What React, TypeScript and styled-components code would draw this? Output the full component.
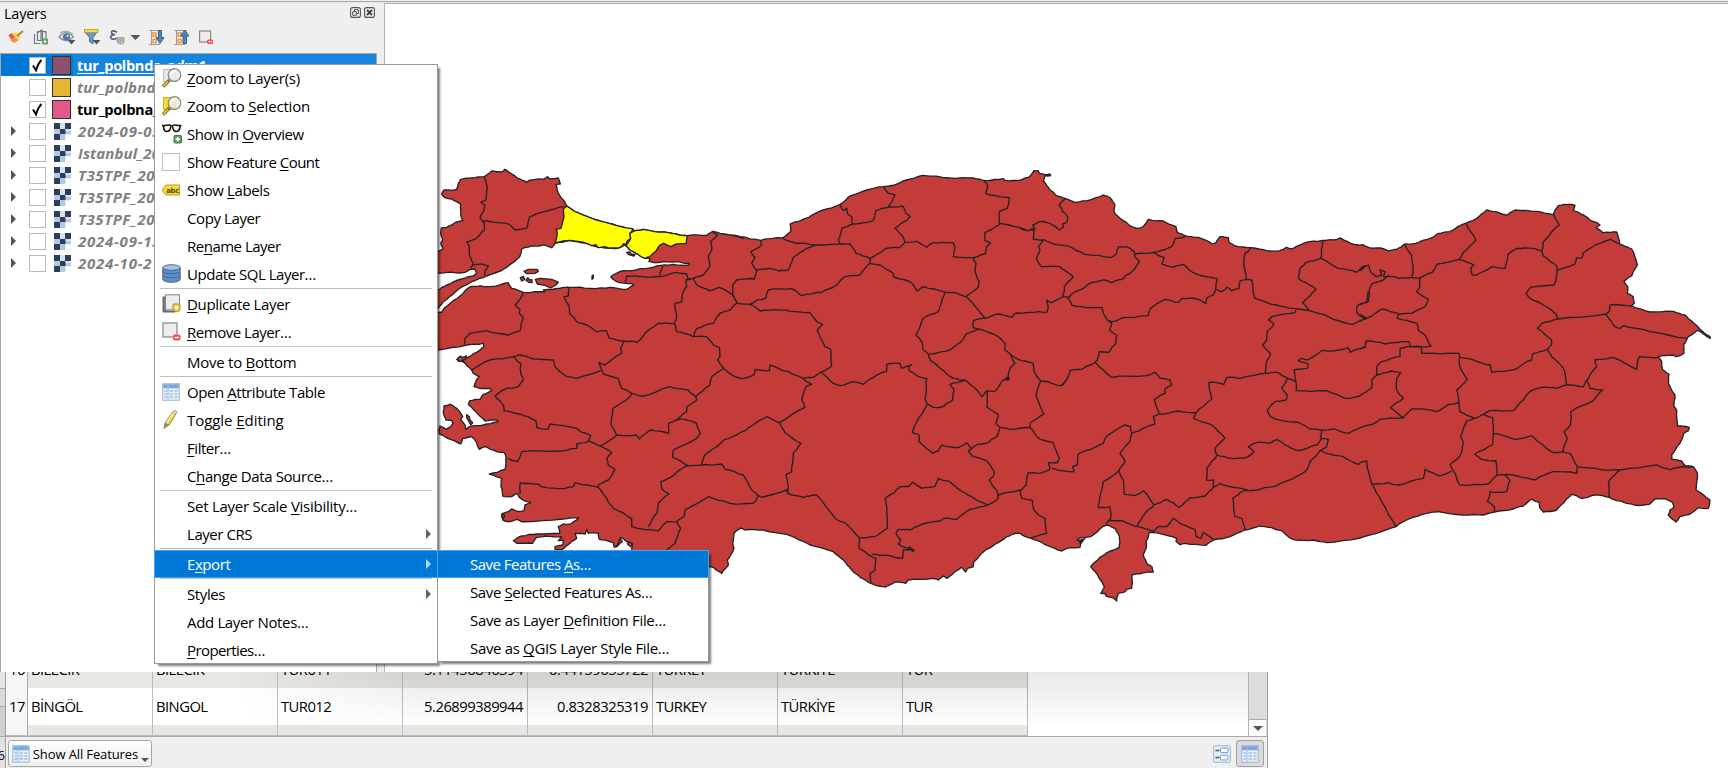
import React from "react";
import styled, { createGlobalStyle, css } from "styled-components";

const GlobalStyle = createGlobalStyle`
  * { box-sizing: border-box; }
  body { margin: 0; background: #fff; overflow: hidden; }
  #root { font-family: "Open Sans", "Noto Sans", sans-serif; color: #000; }
`;

/* ---------- map geometry ---------- */

type Pt = [number, number];
type Frame = "A" | "B" | "C" | "D" | "E";

// Digitising frames: origin of each sheet; all sheets are drawn at 3 units per pixel.
const ORIGIN: Record<Frame, Pt> = {
  A: [430, 150],
  B: [430, 370],
  C: [720, 150],
  D: [1020, 150],
  E: [1360, 180],
};

const pts = (frame: Frame, s: string): Pt[] =>
  s.trim().split(/\s+/).map((p) => {
    const [x, y] = p.split(",").map(Number);
    return [ORIGIN[frame][0] + x / 3, ORIGIN[frame][1] + y / 3] as Pt;
  });

// Deterministic midpoint displacement gives the lines a surveyed look.
const hash = (n: number) => {
  const v = Math.sin(n) * 43758.5453;
  return v - Math.floor(v);
};
const roughen = (line: Pt[], depth = 2): Pt[] => {
  if (depth === 0) return line;
  const out: Pt[] = [line[0]];
  for (let i = 1; i < line.length; i++) {
    const [ax, ay] = line[i - 1];
    const [bx, by] = line[i];
    const len = Math.hypot(bx - ax, by - ay);
    if (len > 3.5) {
      const seed = (ax + bx) * 1.37 + (ay + by) * 2.11;
      const ang = hash(seed) * Math.PI * 2;
      const amp = Math.min(len * 0.055, 0.6);
      out.push([(ax + bx) / 2 + Math.cos(ang) * amp, (ay + by) / 2 + Math.sin(ang) * amp]);
    }
    out.push([bx, by]);
  }
  return roughen(out, depth - 1);
};
const toPath = (line: Pt[], close = false, rough = true) =>
  "M" + (rough ? roughen(line) : line).map(([x, y]) => `${x.toFixed(1)} ${y.toFixed(1)}`).join("L") + (close ? "Z" : "");

const LAND = toPath(
  [
    ...pts("A", `-60,305 24,305 40,295 32,280 38,268 32,250 34,234 50,232 75,218 98,212 92,195 92,163 80,155 65,147 45,143 35,132 42,120
      80,118 85,100 92,88 125,84 162,80 185,63 215,66 225,58 242,70 262,84 290,97 300,90 340,88 352,80 360,87 385,84 391,102
      378,104 382,122 400,150 410,168 432,183 455,193 480,203 500,210 530,218 560,227 585,233 608,236 612,243 640,238 700,246
      735,251 773,257 830,256 848,244 870,250 940,265`),
    ...pts("C", `0,250 60,260 122,271 187,264 212,245 210,222 265,203 310,180 360,163 390,138 440,120 490,110 520,106 560,90 608,76
      690,84 760,84 795,92 850,86 855,91 900,91 925,82 942,62 955,62 958,70 974,74 990,72 992,77 975,77 970,92 990,120 1010,138 1035,145`),
    ...pts("D", `170,157 210,150 250,135 270,143 285,165 282,185 300,205 330,228 350,236 370,230 385,208 430,213 468,230 472,247 495,257
      535,262 575,281 588,278 600,260 625,263 628,278 645,288 690,293 740,302 780,302 800,292 815,297 850,280 908,271 940,270 962,264
      1005,284 1030,284`),
    ...pts("E", `30,204 70,206 85,213 110,208 135,192 175,188 210,175 235,160 270,155 300,137 330,124 350,115 380,90 415,97 440,106
      465,90 530,94 580,104 595,77 612,73 645,76 640,92 652,95 690,120 720,135 708,143 728,158 770,156 775,172 780,193 815,207
      832,255 815,288 792,303 803,320 802,340 820,350 823,370 815,378 870,396 940,394 975,405 1000,428 1020,448 1050,470 1051,475
      1035,465 1012,451 985,470 972,492 972,520 948,530 940,525 895,530 905,545 907,568 927,582 925,610 945,645 942,680 950,690
      952,738 988,742 985,752 970,762 960,790 935,825 935,838 965,843 977,858 1000,860 1012,878 1008,930 1050,960 1045,985
      1015,983 990,1002 960,1010 948,1026 925,1005 930,990 942,982 938,968 915,956 885,957 868,973 845,976 800,970 770,962
      748,952 705,945 665,955 635,943 612,968 590,990 550,996 540,985 538,968 515,957 490,978 460,987 400,997 370,1005 310,1005
      235,995 200,1000 140,1020 108,1040 50,1060 0,1074`),
    ...pts("D", `920,1178 880,1170 820,1169 785,1142 755,1133 718,1128 675,1140 630,1160 580,1170 558,1186 495,1180 480,1184 468,1175
      470,1165 440,1156 400,1148 388,1147 385,1160 378,1175 378,1197 370,1215 382,1243 396,1250 400,1266 375,1268 345,1272
      335,1275 337,1300 335,1315 320,1318 315,1325 295,1330 290,1353 278,1343 258,1338 255,1330 242,1330 253,1312 235,1280
      212,1250 240,1222 270,1203 298,1192 298,1158 285,1135 262,1125 248,1130 212,1160 180,1163 172,1170 185,1175 180,1192
      140,1195 125,1203 75,1184 30,1164`),
    ...pts("C", `900,1150 880,1152 860,1160 830,1180 800,1198 762,1235 760,1250 742,1255 737,1266 725,1252 700,1270 680,1285 670,1278
      655,1290 640,1285 565,1290 557,1300 525,1296 497,1311 460,1303 430,1287 395,1260 370,1230 340,1205 270,1185 200,1153
      130,1140 75,1140 62,1134 42,1150 38,1180 42,1195 22,1230 25,1246 5,1271`),
    ...pts("B", `876,610 850,592 835,590 700,600 610,570 605,540 607,520 590,515 573,502 565,525 553,532 550,517 530,512 508,508 505,490
      475,490 470,478 465,492 435,490 440,505 420,520 398,538 375,538 375,530 398,525 400,510 385,512 395,500 345,498 320,502
      308,520 260,520 250,512 275,498 320,492 390,490 385,470 400,462 422,462 447,443 400,447 275,455 262,448 232,455 218,450
      215,432 235,425 245,417 265,425 282,422 285,405 303,397 290,395 268,382 262,370 245,380 218,378 213,350 215,325 178,312
      225,298 228,260 222,247 200,245 165,230 148,238 140,218 125,200 98,205 92,222 78,215 45,200 28,192 26,180 30,168 48,178
      62,170 70,160 65,152 48,150 40,125 42,108 60,103 80,115 98,140 92,150 105,165 108,178 118,170 160,165 205,155 200,150
      165,153 130,118 115,102 120,92 150,88 160,73 185,62 180,55 150,55 132,50 140,28 148,20 130,10 125,0`),
    ...pts("A", `100,635 80,628 115,622 150,600 162,590 160,580 110,585 24,600 -60,610`),
  ],
  true
);

const SEAS = [
  toPath(pts("A", `-60,372 24,370 50,367 105,367 120,358 135,357 140,368 130,378 95,387 50,405 24,420 -60,450`), true),
  toPath(
    pts("A", `-60,500 24,475 40,455 48,450 85,418 125,395 170,378 225,355 245,340 268,322 275,297 310,288 345,285 365,293 376,279 420,271
      470,280 497,290 535,294 565,294 585,285 600,300 645,325 660,325 657,335 690,337 740,335 777,340 777,345 730,343 680,348
      650,355 580,362 542,380 560,395 588,400 612,403 590,418 540,412 480,415 420,412 390,415 340,420 345,425 282,428
      245,415 235,398 180,410 150,408 122,410 90,438 52,468 45,472 35,487 24,487 -60,520`),
    true
  ),
];

const ISLANDS = [
  pts("A", `282,364 295,358 322,358 325,364 315,370 290,371`),
  pts("A", `316,388 330,385 365,388 385,396 378,405 362,414 345,406 322,402`),
  pts("A", `271,383 280,379 284,388 275,393`),
  pts("A", `288,391 293,383 300,390 306,389 306,398 296,397`),
  pts("A", `486,378 490,375 490,385 486,388`),
  pts("A", `590,307 600,306 604,312 615,314 612,318 596,314`),
  pts("A", `83,624 92,618 95,623 110,618 106,628 98,630 104,638 94,633 85,634`),
  pts("B", `110,134 118,140 120,150 128,158 122,165 114,150 110,143`),
  pts("B", `570,505 577,515 570,520 560,530`),
  pts("B", `597,515 608,522 602,530 592,522`),
  pts("B", `218,430 224,438 220,446 214,438`),
].map((p) => toPath(p, true, false));

const SELECTED = [
  toPath(
    pts("A", `410,168 432,183 455,193 480,203 500,210 530,218 560,227 585,233 608,236 605,245 600,250 602,265 592,272 588,284 580,281
      577,288 565,294 535,294 525,290 505,293 497,284 485,287 470,280 455,276 420,271 400,273 376,279 380,262 382,248 379,238
      393,235 402,200 400,178`),
    true,
    false
  ),
  toPath(
    pts("A", `612,243 640,238 700,246 735,251 773,257 768,280 740,282 722,290 700,280 690,285 680,300 660,320 645,325 600,300 585,285
      592,283 602,265 600,250`),
    true
  ),
];

const BORDER_SOURCE: [Frame, string][] = [
  ["A", "162,80 172,110 168,150 152,157 165,165 162,180 150,203 162,220 163,240 135,268 110,275 118,290 118,315 130,340 122,355"],
  ["A", "160,213 200,217 235,222 255,240 290,235 300,200 340,185 385,172 403,170"],
  ["A", "130,345 155,342 175,348 165,362 165,378"],
  ["A", "103,583 105,565 120,550 170,542 235,555 270,542 280,505 268,490 270,478 256,465 280,430"],
  ["A", "417,415 415,438 402,440 418,470 420,492 440,515 470,525 500,545 528,542 538,565 580,573 622,577 645,550 685,520 733,520"],
  ["A", "733,520 740,500 735,460 755,455 758,430 770,410 768,390 787,385"],
  ["A", "733,520 740,545 770,552 790,560 830,560 850,585 868,592 870,620 863,630 882,655"],
  ["A", "585,397 590,378 640,380 690,380 690,370 698,350 690,340"],
  ["A", "690,380 740,367 770,372 773,385 790,385"],
  ["A", "848,244 862,255 842,275 845,300 835,320 840,345 820,375 790,385"],
  ["A", "790,385 800,405 838,422 868,412 905,432"],
  ["C", "122,271 125,285 92,305 105,322 95,340 110,360 103,387 50,390 38,405 38,432 52,460"],
  ["A", "905,432 922,460"],
  ["A", "790,560 800,535 850,520 870,490 900,480 920,460"],
  ["C", "52,460 90,463 110,450 138,445 145,420 215,416 245,437 305,427 350,405 375,380 420,375 450,340"],
  ["C", "90,463 120,483 175,480 210,484 270,487 290,515 308,523 292,540 315,590 332,598 335,648 300,668 280,682 248,685 205,665 150,645 148,662 105,658 102,674 68,686 40,678 10,655"],
  ["C", "110,360 150,355 175,363 205,360 220,322 260,295 285,287"],
  ["C", "187,264 230,280 285,285 360,282 390,282 408,310 450,325 450,340"],
  ["C", "360,163 370,182 380,175 383,192 395,200 398,222 365,235 355,270 360,282"],
  ["C", "398,222 460,212 468,182 505,172 525,135 505,130 490,110"],
  ["C", "505,172 548,168 558,190 570,200 560,212 525,235 545,255 555,277 540,293 497,295 450,325"],
  ["C", "555,277 590,274 620,292 640,278 700,278 705,292 700,320 765,322 795,312 800,290 812,280 795,272 795,248 838,225 838,185 862,175 868,143 810,135 797,130 803,105 792,92"],
  ["C", "838,220 885,230 925,243 940,235"],
  ["C", "450,340 480,345 520,370 520,380 570,395 592,423 610,410 670,425 705,427 738,440 775,412 778,395 765,365 768,340 760,330 765,322"],
  ["C", "738,440 762,465 795,505 760,512 760,533 775,537"],
  ["C", "795,505 840,492 875,502 885,490 930,487 980,487 985,475"],
  ["D", "85,478 80,450 95,458 130,440 148,442"],
  ["C", "675,427 660,470 655,485 610,505 600,530 588,555 605,575 610,600 625,613 632,632 660,655 700,685 735,690"],
  ["C", "625,613 655,608 690,600 720,578 740,550 775,537 835,560 855,580 855,600 870,612 885,640 870,655 865,685 850,690 822,725 800,722 785,740 765,715 735,690"],
  ["C", "858,683 866,681 868,688 860,690 858,683"],
  ["C", "870,612 905,632 940,640 942,665 962,692 985,695 1022,707 1045,680"],
  ["C", "735,690 690,703 702,718 698,750 670,770 640,772 622,762 615,745 620,685 595,680 568,662 565,650 575,645 545,655 540,640 500,643 500,665 470,675 430,703 400,695 360,707 340,700 305,668"],
  ["C", "622,762 590,815 577,848 597,855 597,875 637,910 655,903 665,885 715,893 740,878 757,897"],
  ["C", "800,722 800,770 835,793 828,820 840,832 870,838 930,832 930,820 972,792 957,760 948,735 962,692"],
  ["C", "840,832 830,860 800,880 775,882 745,903 755,917 800,933 823,965 820,980 808,990 820,1010 832,1025 835,1045 803,1065"],
  ["C", "835,1035 900,1020 905,1045 938,1052 940,1075 955,1095 975,1105 980,1150 932,1165"],
  ["C", "903,1022 918,1005 925,968 960,970 990,957"],
  ["C", "930,832 960,868 1000,878 1018,925 1012,938 985,938 990,957"],
  ["C", "803,1065 755,1040 720,1020 690,995 655,985 645,1010 605,1015 578,997 565,1010 540,1010 520,1030 495,1045 500,1085 502,1135 465,1160 418,1163"],
  ["C", "803,1065 750,1078 710,1108 670,1105 660,1113 600,1125 570,1140 535,1138 528,1150 542,1170 535,1182 555,1192 580,1205 582,1200 568,1190 566,1200 550,1200 548,1225 510,1217 455,1213"],
  ["C", "418,1163 418,1195 440,1210 468,1225 465,1260 450,1270 453,1297"],
  ["C", "418,1163 375,1118 345,1105 290,1035 250,1042 203,1030 200,1020 125,1042 115,1037"],
  ["C", "203,1030 203,1000 198,973 215,965 220,910 243,880 195,848 178,818 140,800 100,825 50,855 15,868 0,882"],
  ["C", "178,818 255,772 245,750 258,710 275,703 248,685"],
  ["D", "135,147 118,165 128,185 143,200 142,215 128,222 130,232 118,240 90,220 60,215 38,225 45,238 20,242 0,235"],
  ["D", "40,235 40,268 75,270 100,282 145,288 195,313 275,322 290,310 295,290 320,290 343,305 345,320 358,333 335,365 315,378 312,385 275,398 250,390 205,402 195,412 155,432 145,445 155,465 195,472 245,472 250,490 262,510"],
  ["D", "70,270 55,290 60,300 50,330 65,350 120,350 160,380 133,410 128,440"],
  ["D", "345,312 400,307 430,300 455,290 465,265 495,260"],
  ["D", "400,307 432,322 425,342 460,352 490,343 520,368 560,380 592,385 587,418 605,425 622,412 635,422 657,415 660,392 678,388 672,350 675,310 692,295"],
  ["D", "587,418 580,435 560,445 557,460 535,448 485,445 475,457 435,448 412,460 390,478 385,497 310,503 275,515 262,510"],
  ["D", "678,388 695,390 705,445 770,465 790,470 868,482 910,493 940,508 997,523 1035,507 1012,490 1010,470 1020,462 1040,458 1045,425"],
  ["D", "868,482 848,458 888,418 865,402 835,385 840,355 858,337 903,325 908,271"],
  ["D", "903,325 955,355 1010,367 1035,347"],
  ["D", "828,480 825,488 755,500 745,510 762,522 742,545 740,570 728,585 752,612 742,630 735,670"],
  ["D", "262,510 275,520 268,540 290,555 288,580 265,608 238,605 232,630 225,637 185,658 150,662 145,680 125,707"],
  ["D", "225,637 275,682 380,677 405,667 420,685 450,690 455,705 435,717 435,730 403,748 418,790"],
  ["D", "418,792 475,783 528,788 575,748 567,697 612,703 620,682 660,685 735,670 772,667 803,685 828,695"],
  ["D", "803,685 785,712 802,735 798,750 765,755 742,780 750,798 770,808 838,818 870,837 905,840 900,865"],
  ["D", "828,695 822,660 862,655 865,642 835,632 845,625 862,630 905,602 940,603 985,593 990,607 1035,592 1040,573"],
  ["D", "828,695 828,722 920,722 975,745 1020,738"],
  ["D", "905,840 945,837 985,850 1020,833"],
  ["D", "528,788 520,805 575,825 615,865 585,895 590,915 635,925 680,922 702,905 685,890 710,878 750,880 770,868 795,885 835,902 890,885 905,865 925,868 920,890 900,902"],
  ["D", "590,918 560,955 560,990 582,990 580,1012"],
  ["D", "580,1012 600,1000 640,1012 700,1022 770,1007 835,977 860,960 870,935 900,902 930,912 970,920 1015,943 1020,940"],
  ["D", "700,1020 670,1022 638,1045 645,1100 665,1105 675,1140"],
  ["D", "418,792 400,800 405,822 375,833 335,850 332,830 315,825 260,858 250,880 175,912 172,945 158,950 162,965 130,962 95,955"],
  ["D", "335,850 330,875 300,910 315,935 297,962 250,995 240,1040 235,1073 270,1070 272,1105 258,1120"],
  ["D", "297,962 310,990 313,1033 345,1037 370,1022 402,1065 385,1080 355,1120 352,1130"],
  ["D", "402,1065 440,1048 478,1072 510,1043 555,1038 580,1012"],
  ["D", "265,1112 310,1113 352,1130 400,1145 415,1130 440,1130 460,1105 480,1120 525,1138 527,1158 543,1165 550,1147 580,1168"],
  ["D", "172,1172 195,1166 178,1176 190,1172 180,1182"],
  ["E", "135,195 155,225 160,260 155,293 115,295 85,288 70,290 75,275 60,270 65,285 50,290 32,275 25,255 0,272"],
  ["E", "85,288 70,300 35,312 28,330 25,365 0,374"],
  ["E", "155,293 180,293 215,278 232,252 298,238 310,217 348,180 318,130"],
  ["E", "180,293 180,322 170,335 205,358 195,380 155,400 115,402 112,415 172,430 175,450 198,470 213,498 150,500 147,485 75,492 18,483 15,500 0,508"],
  ["E", "115,400 65,387 20,415 0,403"],
  ["E", "20,415 0,425"],
  ["E", "298,238 342,255 332,265 337,285 350,285 395,260 435,265 443,225 470,205 520,205 545,212 550,185 598,135 582,104"],
  ["E", "545,212 550,228 588,255 592,270 582,315 512,322 498,340 510,355 555,378 590,405 592,417"],
  ["E", "592,270 645,252 650,233 665,235 670,218 720,190 750,178 775,192"],
  ["E", "815,378 750,375 748,395 738,402 592,417 545,430 532,445 575,480 575,492 563,507 520,520 515,540 465,568 395,577 390,555 345,542 300,533 297,520 185,520 183,500 150,500"],
  ["E", "738,402 765,440 780,446 790,437 870,455 983,475"],
  ["E", "563,507 575,530 610,565 620,615 670,620 680,600"],
  ["E", "680,602 690,585 710,560 705,540 760,532 830,568 838,530 895,533"],
  ["E", "680,602 690,625 728,630 700,662 632,695 632,735 612,755 622,775 608,815"],
  ["E", "620,615 592,625 545,622 510,635 490,660 460,692 390,692 370,703 345,715 300,695 297,668 290,630 322,597 300,560 297,533"],
  ["E", "370,703 398,712 400,760 465,778 515,767 535,785 580,818 608,815 630,820 652,860 650,880 580,875 525,900 440,883 412,885"],
  ["E", "400,760 397,795 345,822 365,838 408,842 412,885 385,912 300,915 285,880 270,855 300,828 310,790 302,770 320,722 345,715"],
  ["E", "297,668 262,675 230,695 195,688 155,687 130,713 92,683 130,655 110,630 110,595 122,577 95,573 50,585 50,560 65,545 120,530 120,505 150,500"],
  ["E", "50,585 35,600 35,625 0,648"],
  ["E", "130,713 60,718 30,735 0,743"],
  ["E", "0,848 20,843 35,912 65,965 108,1040"],
  ["E", "35,912 85,908 115,915 190,895 195,868 240,888 275,873"],
  ["E", "435,885 450,903 440,935 390,935 383,965 403,980 403,997"],
  ["E", "652,860 720,868 780,870 745,905 748,952"],
  ["E", "780,870 890,855 930,870 965,860 1000,860"],
  ["A", "125,660 180,630 250,620 272,640 272,670 280,690 265,710 230,715 195,738 220,765 222,785"],
  ["A", "250,620 270,615 310,627 370,630 375,650 410,680 440,685 515,660 507,637 525,645 575,610 572,595 580,575"],
  ["A", "515,660 520,672 565,685 575,715 605,730"],
  ["A", "605,730 640,738 720,710 775,720 797,740 840,705 845,680 882,655"],
  ["B", "222,122 270,132 318,152 320,172 355,177 360,162 440,175 455,187 482,197 475,212 510,228 560,195 543,165 548,115 600,80 605,70"],
  ["B", "797,80 800,90 770,110 770,125 740,150 715,160 715,190 662,180 628,207 620,195 560,195"],
  ["B", "740,150 765,148 800,160 812,190 800,205 730,240 728,262 775,287 815,285 875,282 885,298 940,315 965,360 985,378 970,400 900,400 835,380 765,420 762,440 740,455"],
  ["B", "815,285 825,255 870,222"],
  ["B", "775,287 740,307 725,320 692,335 697,358 717,372 685,400 680,430 655,470"],
  ["B", "475,215 440,222 440,235 385,243 275,245 262,275 235,265"],
  ["B", "510,228 545,248 530,265 535,285 555,298 535,330 505,345 505,352 435,338 430,350 405,355 335,350 325,342 270,338 270,372"],
  ["B", "505,352 530,385 550,415 605,445 605,470 640,478 685,482 710,455 740,455 752,475 735,520 710,540"],
];
const BORDERS = BORDER_SOURCE.map(([f, s]) => toPath(pts(f, s))).join("");

/* ---------- window shell ---------- */

const Screen = styled.div`
  position: relative;
  display: flex;
  flex-direction: column;
  width: 1728px;
  height: 768px;
  overflow: hidden;
  background: #fff;
`;
const TopEdge = styled.div`
  flex: none;
  height: 3px;
  background: #efefef;
  border-bottom: 1px solid #e4e4e4;
  box-shadow: inset 0 -1px 0 #a9a9a9;
`;
const Workspace = styled.div`
  flex: none;
  display: flex;
  height: 669px;
`;
const Dock = styled.section`
  display: flex;
  flex-direction: column;
  flex: none;
  width: 384px;
  background: #efefef;
`;
const DockTitle = styled.header`
  display: flex;
  align-items: center;
  height: 19px;
  padding: 1px 9px 0 4px;
  font-size: 14.5px;
  letter-spacing: -0.25px;
`;
const DockName = styled.span`
  flex: 1;
`;
const DockButtons = styled.span`
  display: flex;
  gap: 3px;
  margin-top: -1px;
`;
const Toolbar = styled.div`
  display: flex;
  align-items: center;
  height: 29px;
  margin-bottom: 2px;
  padding-left: 7px;
  svg { flex: none; display: block; }
`;
const Tree = styled.div`
  flex: 1;
  width: 377px;
  background: #fff;
  border: 1px solid #a7a7a7;
  border-bottom: 0;
  overflow: hidden;
`;
const TreeRow = styled.div<{ $selected?: boolean }>`
  display: flex;
  align-items: center;
  height: 22px;
  padding-left: 10px;
  background: ${(p) => (p.$selected ? "linear-gradient(90deg,#0078d7 72px,#1683dd 72px)" : "transparent")};
`;
const Expander = styled.i<{ $shown: boolean }>`
  width: 5px;
  margin-right: 13px;
  border-left: 5px solid ${(p) => (p.$shown ? "#555" : "transparent")};
  border-top: 5px solid transparent;
  border-bottom: 5px solid transparent;
`;
const CheckBox = styled.span`
  display: flex;
  width: 17px;
  height: 17px;
  margin-right: 6px;
  background: #fff;
  border: 1px solid #b9b9b9;
`;
const Swatch = styled.span<{ $color: string }>`
  width: 19px;
  height: 19px;
  margin-right: 6px;
  background: ${(p) => p.$color};
  border: 1px solid #3a3030;
`;
const RasterWrap = styled.span`
  width: 17px;
  height: 17px;
  margin: 0 7px 0 2px;
`;
const LayerName = styled.span<{ $tone: "active" | "muted" | "plain"; $ls: number }>`
  font-weight: 700;
  font-size: ${(p) => (p.$tone === "muted" ? 15 : 14.6)}px;
  letter-spacing: ${(p) => p.$ls}px;
  white-space: nowrap;
  line-height: 20px;
  ${(p) => p.$tone === "active" && css`color: #fff; text-decoration: underline; text-underline-offset: 2px;`}
  ${(p) => p.$tone === "muted" && css`color: #808080; font-style: italic;`}
`;
const Canvas = styled.main`
  flex: 1;
  border-left: 1px solid #b5b5b5;
  border-top: 1px solid #b5b5b5;
  background: #fff;
  overflow: hidden;
`;
const MapSvg = styled.svg`
  display: block;
  width: 1343px;
  height: 668px;
`;

/* ---------- context menus ---------- */

const MenuPanel = styled.div<{ $x: number; $y: number; $w: number }>`
  position: absolute;
  left: ${(p) => p.$x}px;
  top: ${(p) => p.$y}px;
  width: ${(p) => p.$w}px;
  background: #fff;
  box-shadow: inset 0 0 0 1px #989898, 3px 3px 2px -1px rgba(0, 0, 0, 0.5);
  font-size: 15px;
`;
const MenuRow = styled.div<{ $hot?: boolean; $text: number }>`
  display: flex;
  align-items: center;
  height: 28px;
  padding: 0 7px 1px 8px;
  color: ${(p) => (p.$hot ? "#fff" : "#000")};
  ${(p) => p.$hot && css`background: #0078d7; box-shadow: inset 0 0 0 1px #42a5f5;`}
  > :first-child { width: ${(p) => p.$text - 8}px; }
`;
const IconSlot = styled.span`
  display: flex;
  flex: none;
  svg { display: block; }
`;
const MenuText = styled.span<{ $ls: number }>`
  flex: 1;
  white-space: pre;
  letter-spacing: ${(p) => p.$ls}px;
  u { text-underline-offset: 2px; text-decoration-thickness: 1px; text-decoration-skip-ink: none; }
`;
const SubArrow = styled.i<{ $hot?: boolean }>`
  border-left: 5px solid ${(p) => (p.$hot ? "#b5d7f3" : "#606060")};
  border-top: 5px solid transparent;
  border-bottom: 5px solid transparent;
`;
const Separator = styled.hr`
  height: 2px;
  margin: 0 6px;
  border: 0;
  border-top: 1px solid #c0c0c0;
`;

/* ---------- attribute table ---------- */

const TableStrip = styled.div`
  display: flex;
  flex: 1;
  min-height: 0;
`;
const Behind = styled.div`
  display: flex;
  flex-direction: column;
  justify-content: flex-end;
  width: 5px;
  height: 96px;
  overflow: hidden;
  background: linear-gradient(#e4e4e4 0 16px, #a8a8a8 16px 17px, #dadada 17px 34px, #a8a8a8 34px 35px, #d0d0d0 35px 64px, #aaa 64px 65px, #e2e2e2 65px);
  font-size: 13px;
  line-height: 26px;
  direction: rtl;
`;
const TableWindow = styled.section`
  display: flex;
  flex-direction: column;
  width: 1263px;
  border-left: 1px solid #a0a0a0;
  border-right: 1px solid #a0a0a0;
  background: #efefef;
`;
const GridArea = styled.div`
  position: relative;
  display: flex;
  height: 65px;
  overflow: hidden;
  border-bottom: 1px solid #a9a9a9;
  background: #fff;
`;
const Rows = styled.div`
  display: flex;
  flex-direction: column;
  justify-content: flex-end;
  width: 1022px;
`;
const Row = styled.div<{ $h: number; $alt?: boolean }>`
  display: grid;
  grid-template-columns: 22px repeat(8, 125px);
  flex: none;
  height: ${(p) => p.$h}px;
  background: ${(p) => (p.$alt ? "#e8e7e3" : "#fff")};
  overflow: hidden;
  line-height: 37px;
  font-size: 14.8px;
`;
const Cell = styled.span<{ $right?: boolean; $head?: boolean }>`
  padding: 0 ${(p) => (p.$right ? 4 : 0)}px 0 ${(p) => (p.$head ? 1 : 3)}px;
  border-right: 1px solid #bcbcbc;
  border-bottom: 1px solid #bcbcbc;
  text-align: ${(p) => (p.$head ? "center" : p.$right ? "right" : "left")};
  letter-spacing: ${(p) => (p.$right ? -0.5 : -0.55)}px;
  ${(p) => p.$head && css`background: #f6f6f6; border-right-color: #a8a8a8;`}
  white-space: nowrap;
`;
const Filler = styled.div`
  flex: 1;
`;
const Shade = styled.div`
  position: absolute;
  inset: 0 19px 0 230px;
  background: linear-gradient(rgba(0, 0, 0, 0.09), rgba(0, 0, 0, 0) 55px);
  mask-image: linear-gradient(90deg, transparent, #000 180px);
`;
const ScrollTrack = styled.div`
  display: flex;
  flex-direction: column;
  justify-content: flex-end;
  width: 19px;
  padding-right: 1px;
  background: #dcdcdc;
  border-left: 1px solid #b0b0b0;
`;
const ScrollButton = styled.div`
  display: grid;
  place-items: center;
  height: 17px;
  border-top: 1px solid #a9a9a9;
  background: #fafafa;
`;
const DownTri = styled.i<{ $s: number }>`
  border-top: ${(p) => p.$s}px solid #555;
  border-left: ${(p) => p.$s}px solid transparent;
  border-right: ${(p) => p.$s}px solid transparent;
`;
const Footer = styled.footer`
  display: flex;
  align-items: center;
  flex: 1;
  padding: 3px 3px 1px 2px;
`;
const FilterButton = styled.div`
  display: flex;
  align-items: center;
  gap: 3px;
  width: 144px;
  height: 27px;
  padding: 0 2px 0 3px;
  border: 1px solid #a5a5a5;
  border-radius: 3px;
  background: linear-gradient(#fdfdfd, #efefef);
  font-size: 13px;
  letter-spacing: -0.12px;
  white-space: nowrap;
  ${DownTri} { align-self: flex-end; margin: 0 0 4px auto; }
`;
const ViewButtons = styled.div`
  display: flex;
  align-items: center;
  gap: 5px;
  margin-left: auto;
`;
const Pressed = styled.span`
  display: grid;
  place-items: center;
  width: 28px;
  height: 27px;
  border: 1px solid #a0a0a0;
  border-radius: 3px;
  background: #dadada;
`;

/* ---------- icons ---------- */

const ZoomIcon = ({ sheet }: { sheet: string }) => (
  <svg width="20" height="20" viewBox="0 0 20 20">
    <rect x="1.5" y="1.5" width="12" height="12" fill={sheet} stroke={sheet === "#f4dd2e" ? "#cdb21c" : "#bdbdbd"} />
    <path d="M1 18.500L7.500 12" stroke="#8d7020" strokeWidth="3.400" />
    <path d="M1.300 18L6 13.500" stroke="#f0c04c" strokeWidth="1.700" />
    <circle cx="12.500" cy="7" r="6.300" fill="#e9ebe4" fillOpacity=".88" stroke="#888" strokeWidth="1.200" />
    <path d="M8.500 6Q10 2.800 14 3" stroke="#fff" fill="none" strokeWidth="1.300" />
  </svg>
);
const OverviewIcon = () => (
  <svg width="20" height="20" viewBox="0 0 20 20" fill="none">
    <path d="M0 1.500H3Q9.500 0 9.500 3Q10.500 0 16 1.500H19.500" stroke="#111" strokeWidth="1.600" />
    <path d="M1.500 2Q1.500 7.500 5 7.500Q8.500 7 8.600 3M10.800 3Q11 7.500 14.500 7.500Q18 7 18 2" stroke="#111" strokeWidth="1.600" />
    <rect x="12" y="11.500" width="7.500" height="7.500" rx="1" fill="#5c9a60" stroke="#3f7a44" />
    <path d="M15.750 13v4.500M13.500 15.250h4.500" stroke="#fff" strokeWidth="1.700" />
  </svg>
);
const EmptyCheckIcon = () => (
  <svg width="18" height="18" viewBox="0 0 18 18"><rect x=".5" y=".5" width="17" height="17" fill="#fff" stroke="#bdbdbd" /></svg>
);
const AbcText = styled.text`
  font: 700 7px "DejaVu Sans", sans-serif;
  letter-spacing: -0.3px;
  fill: #5d4e05;
`;
const LabelIcon = () => (
  <svg width="19" height="12" viewBox="0 0 19 12">
    <path d="M4 1H17.500V11H4L.8 7.500V4.500Z" fill="#f1da45" stroke="#bf9f12" strokeLinejoin="round" />
    <AbcText x="4.200" y="8.500">abc</AbcText>
  </svg>
);
const DatabaseIcon = () => (
  <svg width="19" height="19" viewBox="0 0 19 19">
    <path d="M.8 3.500V15.500C2 19.200 17 19.200 18.200 15.500V3.500" fill="#5f8fc4" stroke="#47678f" />
    <path d="M.8 7.500C3 10.500 16 10.500 18.200 7.500M.8 11.500C3 14.500 16 14.500 18.200 11.500" fill="none" stroke="#3f6596" />
    <ellipse cx="9.500" cy="3.500" rx="8.700" ry="2.800" fill="#a9c4e2" stroke="#47678f" />
  </svg>
);
const DuplicateIcon = () => (
  <svg width="19" height="19" viewBox="0 0 19 19">
    <path d="M1 3H4V17H13V18H1Z" fill="#777" stroke="#666" />
    <rect x="3.500" y=".8" width="14" height="15" fill="#ecece9" stroke="#858585" />
    <path d="M11 10l7 0 0 6 -3 2 -4 -2z" fill="#e6c94a" stroke="#b3922a" />
    <circle cx="14.500" cy="13.500" r="2" fill="#fff6b8" />
  </svg>
);
const RemoveIcon = () => (
  <svg width="19" height="19" viewBox="0 0 19 19">
    <rect x="1" y="1" width="14" height="14" fill="#ededeb" stroke="#858585" strokeWidth="1.200" />
    <rect x="11" y="12.500" width="7.500" height="6" rx="1.800" fill="#ef4f55" />
    <path d="M12.500 15.500h4.500" stroke="#fff" strokeWidth="1.500" />
  </svg>
);
const TableIcon = () => (
  <svg width="18" height="18" viewBox="0 0 18 18">
    <rect x=".7" y=".7" width="16.600" height="16.600" fill="#e4edf7" stroke="#9db9d8" />
    <rect x="1.200" y="1.200" width="15.600" height="4" fill="#79a8d8" />
    <path d="M6 1v16" stroke="#9dbde0" />
    <path d="M2.500 8h2.500M2.500 11h2.500M2.500 14h2.500M7.500 8h3.500M12.500 8h3M7.500 11h3.500M12.500 11h3M7.500 14h3.500M12.500 14h3" stroke="#88abd2" strokeWidth="1.200" />
  </svg>
);
const FormIcon = () => (
  <svg width="18" height="18" viewBox="0 0 18 18">
    <rect x=".7" y=".7" width="16.600" height="16.600" rx="1" fill="#e4edf7" stroke="#9db9d8" />
    <path d="M2.500 5.500h4M2.500 12.500h4" stroke="#555" strokeWidth="1.300" />
    <rect x="7.500" y="3" width="7.500" height="4.600" rx="1" fill="#fff" stroke="#6d9bcd" />
    <rect x="7.500" y="10.300" width="7.500" height="4.600" rx="1" fill="#fff" stroke="#6d9bcd" />
  </svg>
);
const PencilIcon = () => (
  <svg width="19" height="19" viewBox="0 0 19 19">
    <path d="M2 18.500L3 13L11 1.500Q13 -.2 15 1.800L7.500 14.500Z" fill="#e8d34c" stroke="#9a8c34" />
    <path d="M2 18.500L3 13L7.500 14.500Z" fill="#8b8b8b" />
    <path d="M5 12.500L12.500 1.500" stroke="#fff6a8" strokeWidth="1.400" />
    <path d="M11 1.500Q13 -.2 15 1.800L14 3.500Q12 3.200 10.200 2.700Z" fill="#ddd" stroke="#999" strokeWidth=".6" />
  </svg>
);
const RasterIcon = () => (
  <svg width="17" height="17" viewBox="0 0 17 17">
    <rect width="17" height="17" fill="#b0cae6" />
    <path d="M0 0h6v6H0zM11 0h6v6h-6zM6 6h5.500v5H6zM0 11h6v6H0z" fill="#2f3e55" />
    <path d="M6 0h5v6H6zM11.500 11H17v6h-5.500zM11.500 6H17v2h-5.500z" fill="#d5e2f1" />
    <path d="M11.500 11.500H17V17h-5.500z" fill="#fff" />
  </svg>
);
const DockButton = ({ close }: { close?: boolean }) => (
  <svg width="11" height="11" viewBox="0 0 11 11" fill="none">
    <rect x=".6" y=".6" width="9.800" height="9.800" rx="2" stroke="#555" strokeWidth="1.100" />
    {close ? (
      <path d="M3 3l5 5M8 3l-5 5" stroke="#444" strokeWidth="1.900" />
    ) : (
      <path d="M4.500 4.500V2.700H8.300V6.500H6.500M2.700 4.700H6.300V8.300H2.700Z" stroke="#555" />
    )}
  </svg>
);
const CheckMark = () => (
  <svg width="15" height="15" viewBox="0 0 15 15"><path d="M3 7.500L6 12.500Q8 5.500 11.500 2" fill="none" stroke="#000" strokeWidth="1.900" /></svg>
);

const ToolIcons = () => (
  <svg width="210" height="20" viewBox="7 27 210 20" fill="none">
    {/* style brush */}
    <path d="M9 35L13 33L19 40L14 43L11 41Z" fill="#ef8f50" />
    <path d="M9 36l3 -2M11 38l4 -3" stroke="#e04038" strokeWidth="2" />
    <path d="M12 34l4 -2 5 5 -3 3z" fill="#f6d95a" />
    <path d="M17 36L23 31" stroke="#b9812c" strokeWidth="2.200" />
    {/* add group */}
    <path d="M34.500 34v9.500h6M37.500 31.500v9h8.500v-9zM41 30v10M42.500 31v9" stroke="#6b7885" strokeWidth="1.200" />
    <path d="M38 33l3.500 -3.500 3 3" stroke="#4c7597" />
    <rect x="42" y="38.500" width="6" height="6" rx="1" fill="#5e9a62" />
    <path d="M45 39.700v3.600M43.200 41.500h3.600" stroke="#fff" strokeWidth="1.200" />
    {/* visibility */}
    <path d="M59 37Q66 28.500 73.500 37Q66 44 59 37Z" fill="#e5e9ee" stroke="#8996a3" strokeWidth="1.300" />
    <path d="M60 33Q66 29 73 34" stroke="#9a9a9a" />
    <circle cx="66.500" cy="37" r="3.600" fill="#4c7aa8" />
    <circle cx="67.500" cy="36" r="1.100" fill="#dbe9f5" />
    <path d="M67.500 40h8l-4 4.500z" fill="#555" />
    {/* filter */}
    <path d="M84.500 31.500h13L93 37.500V44l-3.500 -2.500V37.500Z" fill="#6c9bcb" stroke="#476f9c" />
    <rect x="84.500" y="29.500" width="13.500" height="3" fill="#f3dc52" stroke="#b49b2a" strokeWidth=".8" />
    <path d="M92.500 40h8l-4 4.500z" fill="#555" />
    {/* expression filter */}
    <path d="M117 32.200Q111.500 29.500 111.500 32.500Q111.500 34.500 115 34.600Q110.500 34.800 110.700 37.500Q111.500 40.500 117 38.200" stroke="#755080" strokeWidth="1.700" />
    <path d="M117 37.500h7v5l-2 2v-4h-1.500v4l-3.500 -2z" fill="#b3b3b3" stroke="#999" strokeWidth=".7" />
    <path d="M130.500 35h10l-5 5z" fill="#555" />
    {/* expand all */}
    <path d="M149.500 30.500H162M151.500 31v13M149 44.500h11" stroke="#9b9b9b" />
    <path d="M153 33h3v3h-3zM153 39.500h3v3h-3z" fill="#fff" stroke="#ee9035" strokeWidth="1.400" />
    <path d="M158.500 30.500h3v7h2.500L160 43.500L156 37.500h2.500Z" fill="#4f83b6" stroke="#356592" />
    {/* collapse all */}
    <path d="M174.500 30.500H187M176.500 31v13M174 44.500h11" stroke="#9b9b9b" />
    <path d="M178 33h3v3h-3zM178 39.500h3v3h-3z" fill="#fff" stroke="#ee9035" strokeWidth="1.400" />
    <path d="M183 43.500h3.500V36h2.500L184.700 30L180.500 36H183Z" fill="#4f83b6" stroke="#356592" />
    {/* remove layer */}
    <rect x="199.600" y="31" width="11" height="11" fill="#ededeb" stroke="#858585" strokeWidth="1.200" />
    <rect x="207" y="39.500" width="6" height="4.500" rx="1.300" fill="#ef4f55" />
    <path d="M208.300 41.700h3.400" stroke="#fff" strokeWidth="1.100" />
  </svg>
);

/* ---------- data ---------- */

type Layer = { name: string; tone: "active" | "muted" | "plain"; ls: number; color?: string; checked?: boolean };
const LAYERS: Layer[] = [
  { name: "tur_polbnda_adm1", tone: "active", ls: -0.33, color: "#8a526c", checked: true },
  { name: "tur_polbnda_adm2", tone: "muted", ls: 0.2, color: "#e5b636" },
  { name: "tur_polbna_adm0", tone: "plain", ls: -0.3, color: "#e15989", checked: true },
  { name: "2024-09-05", tone: "muted", ls: 0.75 },
  { name: "Istanbul_2024", tone: "muted", ls: 0.1 },
  { name: "T35TPF_2024", tone: "muted", ls: 0.55 },
  { name: "T35TPF_2024", tone: "muted", ls: 0.55 },
  { name: "T35TPF_2024", tone: "muted", ls: 0.55 },
  { name: "2024-09-13", tone: "muted", ls: 0.75 },
  { name: "2024-10-21", tone: "muted", ls: 0.75 },
];

type Item = { label: string; ls: number; icon?: React.ReactNode; sub?: boolean; hot?: boolean };
const MENU: (Item | null)[] = [
  { label: "&Zoom to Layer(s)", ls: -0.25, icon: <ZoomIcon sheet="#e9e9e9" /> },
  { label: "Zoom to &Selection", ls: -0.18, icon: <ZoomIcon sheet="#f4dd2e" /> },
  { label: "Show in &Overview", ls: -0.45, icon: <OverviewIcon /> },
  { label: "Show Feature &Count", ls: -0.52, icon: <EmptyCheckIcon /> },
  { label: "Show &Labels", ls: -0.38, icon: <LabelIcon /> },
  { label: "Copy Layer", ls: -0.4 },
  { label: "Re&name Layer", ls: -0.5 },
  { label: "Update SQL Layer…", ls: -0.47, icon: <DatabaseIcon /> },
  null,
  { label: "&Duplicate Layer", ls: -0.35, icon: <DuplicateIcon /> },
  { label: "&Remove Layer…", ls: -0.48, icon: <RemoveIcon /> },
  null,
  { label: "Move to &Bottom", ls: -0.25 },
  null,
  { label: "Open &Attribute Table", ls: -0.43, icon: <TableIcon /> },
  { label: "Toggle &Editing", ls: -0.06, icon: <PencilIcon /> },
  { label: "&Filter…", ls: -0.45 },
  { label: "C&hange Data Source…", ls: -0.4 },
  null,
  { label: "Set Layer Scale &Visibility…", ls: -0.25 },
  { label: "Layer CRS", ls: -0.45, sub: true },
  null,
  { label: "E&xport", ls: -0.42, sub: true, hot: true },
  null,
  { label: "Styles", ls: -0.4, sub: true },
  { label: "Add Layer Notes…", ls: -0.34 },
  { label: "&Properties…", ls: -0.6 },
];
const SUBMENU: Item[] = [
  { label: "Save Features &As…", ls: -0.5, hot: true },
  { label: "Save &Selected Features As…", ls: -0.38 },
  { label: "Save as Layer &Definition File…", ls: -0.33 },
  { label: "Save as &QGIS Layer Style File…", ls: -0.34 },
];

// "&" marks the accelerator letter, as in the toolkit's own menu strings.
const Mnemonic = ({ text }: { text: string }) => {
  const i = text.indexOf("&");
  if (i < 0) return <>{text}</>;
  return (
    <>
      {text.slice(0, i)}
      <u>{text[i + 1]}</u>
      {text.slice(i + 2)}
    </>
  );
};

const MenuEntry = ({ item, textAt }: { item: Item; textAt: number }) => (
  <MenuRow $hot={item.hot} $text={textAt}>
    <IconSlot>{item.icon}</IconSlot>
    <MenuText $ls={item.ls}><Mnemonic text={item.label} /></MenuText>
    {item.sub && <SubArrow $hot={item.hot} />}
  </MenuRow>
);

const ROWS = [
  { h: 37, alt: true, cells: ["16", "BİLECİK", "BILECIK", "TUR011", "5.11456846394", "0.44159655722", "TURKEY", "TÜRKİYE", "TUR"] },
  { h: 37, alt: false, cells: ["17", "BİNGÖL", "BINGOL", "TUR012", "5.26899389944", "0.8328325319", "TURKEY", "TÜRKİYE", "TUR"] },
  { h: 11, alt: true, cells: ["", "", "", "", "", "", "", "", ""] },
];

export default function App() {
  return (
    <Screen>
      <GlobalStyle />
      <TopEdge />
      <Workspace>
        <Dock>
          <DockTitle>
            <DockName>Layers</DockName>
            <DockButtons><DockButton /><DockButton close /></DockButtons>
          </DockTitle>
          <Toolbar><ToolIcons /></Toolbar>
          <Tree>
            {LAYERS.map((l, i) => (
              <TreeRow key={i} $selected={l.tone === "active"}>
                <Expander $shown={!l.color} />
                <CheckBox>{l.checked && <CheckMark />}</CheckBox>
                {l.color ? <Swatch $color={l.color} /> : <RasterWrap><RasterIcon /></RasterWrap>}
                <LayerName $tone={l.tone} $ls={l.ls}>{l.name}</LayerName>
              </TreeRow>
            ))}
          </Tree>
        </Dock>
        <Canvas>
          <MapSvg viewBox="385 4 1343 668" fill="none" stroke="#232323" strokeWidth="1.35" strokeLinejoin="round">
            <path d={LAND} fill="#c43c39" />
            <path d={BORDERS} />
            {SEAS.map((d, i) => <path key={i} d={d} fill="#fff" />)}
            {ISLANDS.map((d, i) => <path key={i} d={d} fill="#c43c39" />)}
            {SELECTED.map((d, i) => <path key={i} d={d} fill="#ffff00" />)}
          </MapSvg>
        </Canvas>
      </Workspace>

      <TableStrip>
        <Behind>6</Behind>
        <TableWindow>
          <GridArea>
            <Rows>
              {ROWS.map((r, i) => (
                <Row key={i} $h={r.h} $alt={r.alt}>
                  {r.cells.map((c, j) => (
                    <Cell key={j} $head={j === 0} $right={j === 4 || j === 5}>{c}</Cell>
                  ))}
                </Row>
              ))}
            </Rows>
            <Filler />
            <ScrollTrack><ScrollButton><DownTri $s={5} /></ScrollButton></ScrollTrack>
            <Shade />
          </GridArea>
          <Footer>
            <FilterButton><TableIcon />Show All Features<DownTri $s={4} /></FilterButton>
            <ViewButtons><FormIcon /><Pressed><TableIcon /></Pressed></ViewButtons>
          </Footer>
        </TableWindow>
      </TableStrip>

      <MenuPanel $x={154} $y={64} $w={284}>
        {MENU.map((m, i) => (m ? <MenuEntry key={i} item={m} textAt={33} /> : <Separator key={i} />))}
      </MenuPanel>
      <MenuPanel $x={437} $y={550} $w={272}>
        {SUBMENU.map((m, i) => <MenuEntry key={i} item={m} textAt={33} />)}
      </MenuPanel>
    </Screen>
  );
}
